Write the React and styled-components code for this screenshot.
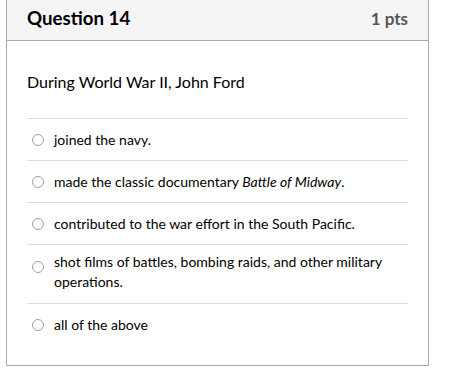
import React from "react";
import styled, { createGlobalStyle } from "styled-components";

const GlobalStyle = createGlobalStyle`
  body {
    margin: 0;
    background: #fff;
    font-family: Lato, "Open Sans", sans-serif;
    color: #2d3b45;
  }
`;

const Card = styled.div`
  width: 423px;
  height: 366px;
  margin-left: 6px;
  border: 1px solid #aaaaaa;
  border-top: none;
  box-sizing: border-box;
  background: #fff;
`;

const Header = styled.div`
  height: 41px;
  box-sizing: border-box;
  background: #f5f5f5;
  border-bottom: 1px solid #aaaaaa;
  display: flex;
  align-items: center;
  justify-content: space-between;
  padding: 0 20px 4px 20px;
`;

const Title = styled.h2`
  margin: 0;
  font-size: 18.7px;
  font-weight: 700;
  color: #000;
`;

const Points = styled.span`
  font-size: 17px;
  font-weight: 700;
  color: #555;
`;

const Body = styled.div`
  padding: 0 20px;
`;

const Prompt = styled.p`
  margin: 0;
  padding: 31px 0 26px;
  font-size: 16px;
  line-height: 20px;
  color: #000;
`;

const Answer = styled.label`
  display: flex;
  align-items: ${(p) => (p.multi ? "flex-start" : "center")};
  gap: 10px;
  min-height: 42px;
  padding: ${(p) => (p.multi ? "7px 0 11px 5px" : "0 0 0 5px")};
  box-sizing: border-box;
  border-top: 1px solid #dddddd;
  font-size: 14px;
  line-height: 20px;
  color: #000;
`;

const Radio = styled.span`
  flex: none;
  width: 12px;
  height: 12px;
  border-radius: 50%;
  border: 1px solid #a0a0a0;
  box-sizing: border-box;
  background: #fff;
  margin-top: ${(p) => (p.multi ? "9px" : "0")};
`;

const answers = [
  { text: "joined the navy." },
  {
    text: (
      <>
        made the classic documentary <em>Battle of Midway</em>.
      </>
    ),
  },
  { text: "contributed to the war effort in the South Pacific." },
  {
    text: "shot films of battles, bombing raids, and other military operations.",
    multi: true,
  },
  { text: "all of the above" },
];

export default function App() {
  return (
    <>
      <GlobalStyle />
      <Card>
        <Header>
          <Title>Question 14</Title>
          <Points>1 pts</Points>
        </Header>
        <Body>
          <Prompt>During World War II, John Ford</Prompt>
          {answers.map((a, i) => (
            <Answer key={i} multi={a.multi}>
              <Radio multi={a.multi} />
              <span>{a.text}</span>
            </Answer>
          ))}
        </Body>
      </Card>
    </>
  );
}
